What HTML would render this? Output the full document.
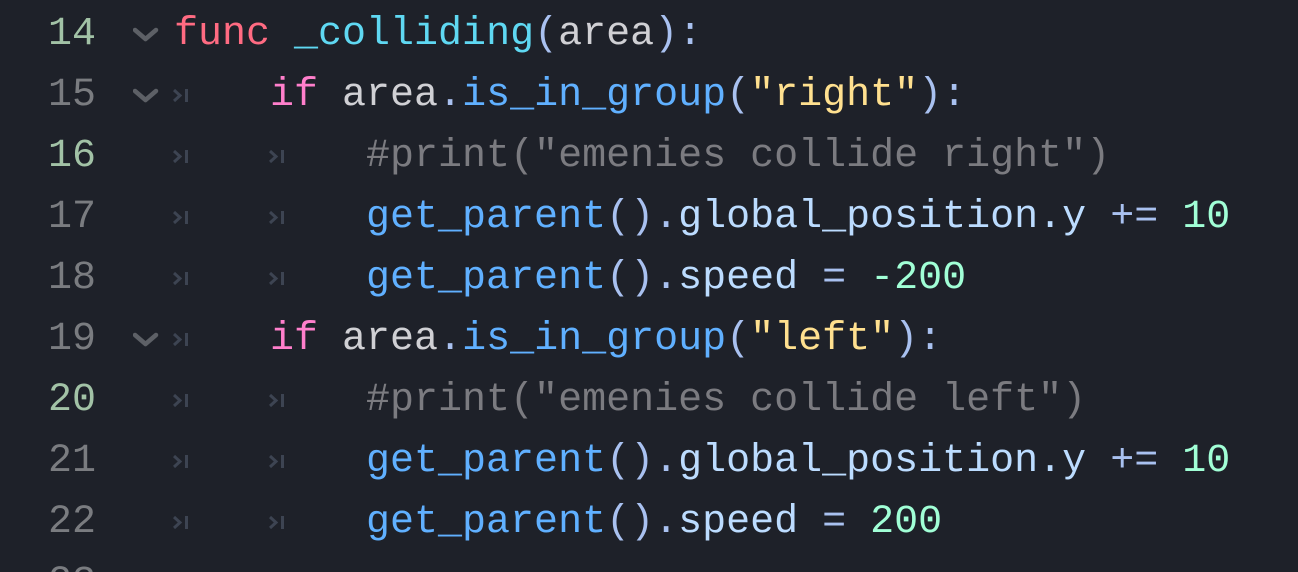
<!DOCTYPE html><html><head><style>
html,body{margin:0;width:1298px;height:572px;overflow:hidden}
body{background:#1e2129;position:relative;font-family:"Liberation Mono",monospace;font-size:40px}
.l{position:absolute;left:0;height:61px;line-height:61px;width:1298px;white-space:pre}
.n{position:absolute;right:1202px;color:#7a7c80}
.g{color:#a2c2a6}
.c{position:absolute;left:174px}
.chev{position:absolute;left:133px;top:22px}
.t{position:absolute;top:24px}
.k{color:#ff6b82}.f{color:#5fd8f2}.p{color:#a9c1f0}.w{color:#d0d0d4}.i{color:#ff7fcb}.m{color:#60b0ff}.s{color:#ffe08f}.cm{color:#7b7b80}.pr{color:#bcdcff}.num{color:#a1ffd6}.op{color:#a9c1f0}
</style></head><body>
<svg width="0" height="0" style="position:absolute"><defs>
<g id="ch"><path d="M2 4 L12.5 13 L23 4" stroke="#5d6066" stroke-width="4.5" fill="none" stroke-linecap="round" stroke-linejoin="round"/></g>
<g id="tb"><path d="M1 1 L7 6.5 L1 12" stroke="#3d4452" stroke-width="3" fill="none"/><rect x="12" y="0" width="3" height="13" fill="#3d4452"/></g>
</defs></svg>

<div class="l" style="top:4px"><span class="n g">14</span><svg class="chev" width="26" height="18"><use href="#ch"/></svg><span class="c"><span class="k">func</span> <span class="f">_colliding</span><span class="p">(</span><span class="w">area</span><span class="p">):</span></span></div>

<div class="l" style="top:65px"><span class="n">15</span><svg class="chev" width="26" height="18"><use href="#ch"/></svg><svg class="t" style="left:173px" width="16" height="14"><use href="#tb"/></svg><span class="c">    <span class="i">if</span> <span class="w">area</span><span class="p">.</span><span class="m">is_in_group</span><span class="p">(</span><span class="s">"right"</span><span class="p">):</span></span></div>

<div class="l" style="top:126px"><span class="n g">16</span><svg class="t" style="left:173px" width="16" height="14"><use href="#tb"/></svg><svg class="t" style="left:269px" width="16" height="14"><use href="#tb"/></svg><span class="c">        <span class="cm">#print("emenies collide right")</span></span></div>

<div class="l" style="top:187px"><span class="n">17</span><svg class="t" style="left:173px" width="16" height="14"><use href="#tb"/></svg><svg class="t" style="left:269px" width="16" height="14"><use href="#tb"/></svg><span class="c">        <span class="m">get_parent</span><span class="p">().</span><span class="pr">global_position.y</span> <span class="op">+=</span> <span class="num">10</span></span></div>

<div class="l" style="top:248px"><span class="n">18</span><svg class="t" style="left:173px" width="16" height="14"><use href="#tb"/></svg><svg class="t" style="left:269px" width="16" height="14"><use href="#tb"/></svg><span class="c">        <span class="m">get_parent</span><span class="p">().</span><span class="pr">speed</span> <span class="op">=</span> <span class="num">-200</span></span></div>

<div class="l" style="top:309px"><span class="n">19</span><svg class="chev" width="26" height="18"><use href="#ch"/></svg><svg class="t" style="left:173px" width="16" height="14"><use href="#tb"/></svg><span class="c">    <span class="i">if</span> <span class="w">area</span><span class="p">.</span><span class="m">is_in_group</span><span class="p">(</span><span class="s">"left"</span><span class="p">):</span></span></div>

<div class="l" style="top:370px"><span class="n g">20</span><svg class="t" style="left:173px" width="16" height="14"><use href="#tb"/></svg><svg class="t" style="left:269px" width="16" height="14"><use href="#tb"/></svg><span class="c">        <span class="cm">#print("emenies collide left")</span></span></div>

<div class="l" style="top:431px"><span class="n">21</span><svg class="t" style="left:173px" width="16" height="14"><use href="#tb"/></svg><svg class="t" style="left:269px" width="16" height="14"><use href="#tb"/></svg><span class="c">        <span class="m">get_parent</span><span class="p">().</span><span class="pr">global_position.y</span> <span class="op">+=</span> <span class="num">10</span></span></div>

<div class="l" style="top:492px"><span class="n">22</span><svg class="t" style="left:173px" width="16" height="14"><use href="#tb"/></svg><svg class="t" style="left:269px" width="16" height="14"><use href="#tb"/></svg><span class="c">        <span class="m">get_parent</span><span class="p">().</span><span class="pr">speed</span> <span class="op">=</span> <span class="num">200</span></span></div>

<div class="l" style="top:553px"><span class="n">23</span></div>
</body></html>
